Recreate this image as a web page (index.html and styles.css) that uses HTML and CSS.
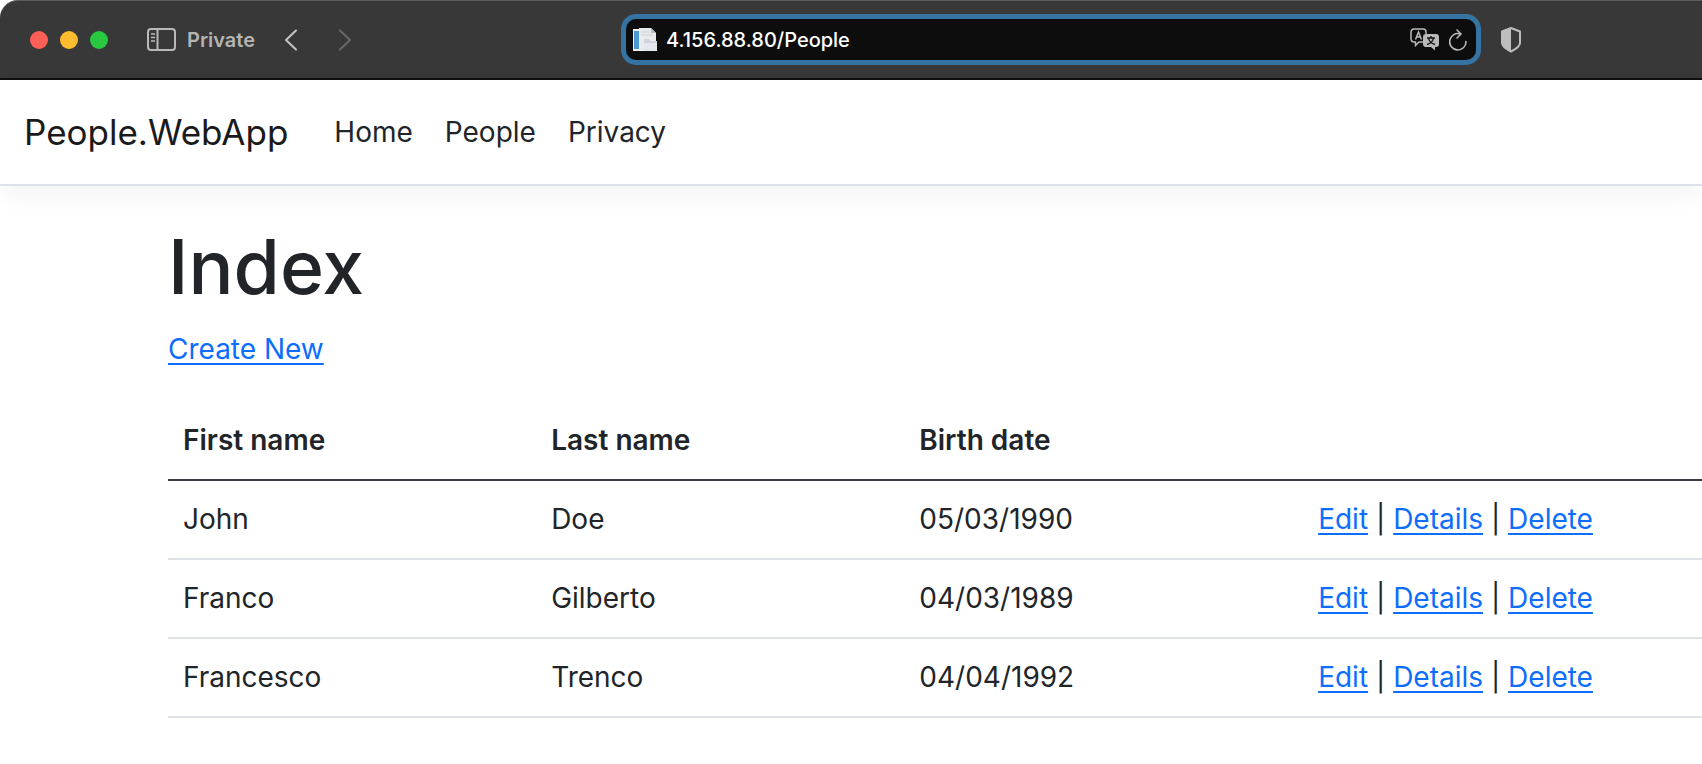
FILE: index.html
```html
<!DOCTYPE html>
<html lang="en">
<head>
<meta charset="utf-8">
<title>Index - People.WebApp</title>
<link rel="stylesheet" href="styles.css">
</head>
<body>
<div class="toolbar">
  <div class="lights">
    <button class="light red" aria-label="Close"></button>
    <button class="light yellow" aria-label="Minimize"></button>
    <button class="light green" aria-label="Zoom"></button>
  </div>
  <button class="icon-button" aria-label="Sidebar">
    <svg width="30" height="24" viewBox="0 0 30 24" fill="none" stroke="#b9b9b9" stroke-width="2"><rect x="1" y="1" width="27" height="21" rx="3"/><path d="M10.500 1v21"/><path d="M4 6h4M4 9.500h4M4 13h4" stroke-width="1.500"/></svg>
  </button>
  <span class="mode">Private</span>
  <button class="icon-button back" aria-label="Back">
    <svg width="14" height="22" viewBox="0 0 14 22" fill="none" stroke="#c4c4c4" stroke-width="2" stroke-linecap="round" stroke-linejoin="round"><path d="M12 1.500 2 11l10 9.500"/></svg>
  </button>
  <button class="icon-button forward" aria-label="Forward">
    <svg width="14" height="22" viewBox="0 0 14 22" fill="none" stroke="#686868" stroke-width="2" stroke-linecap="round" stroke-linejoin="round"><path d="m2 1.500 10 9.500-10 9.500"/></svg>
  </button>
  <div class="address">
    <svg width="26" height="26" viewBox="0 0 26 26"><path d="M1 2h12v22H1z" fill="#eef2f5"/><path d="M2 4h5v18H2z" fill="#4b9bd3"/><path d="M7 1h12l5 5v17H7z" fill="#e8eaec"/><path d="M19 1v5h5z" fill="#b9bdc2"/><path d="M9 5h8M9 8h12" stroke="#cdd1d6"/><path d="M12 12h5l1 2h7v10H12z" fill="#cfd2d8"/><path d="M12 16h13v8H12z" fill="#e4e6ee"/></svg>
    <input class="url" type="text" aria-label="Address" value="4.156.88.80/People">
    <button class="icon-button" aria-label="Translate">
      <svg width="30" height="24" viewBox="0 0 30 24"><path d="M13 14H9l-3.500 3.500V14H4a3 3 0 0 1-3-3V4a3 3 0 0 1 3-3h9a3 3 0 0 1 3 3v2" fill="none" stroke="#b9b9b9" stroke-width="1.500"/><path d="M5.500 11.500 8.500 4l3 7.500M6.500 9h4" fill="none" stroke="#b9b9b9" stroke-width="1.500"/><path d="M16 6h10a3 3 0 0 1 3 3v7a3 3 0 0 1-3 3h-1v3.500L21 19h-5a3 3 0 0 1-3-3V9a3 3 0 0 1 3-3z" fill="#b9b9b9"/><path d="M17 10h8M21 8v2M23.500 10c-.5 3-3 5.500-6.500 6.500M18.500 10c.5 3 3 5.500 6.500 6.500" fill="none" stroke="#161616" stroke-width="1.500"/></svg>
    </button>
    <button class="icon-button" aria-label="Reload">
      <svg width="20" height="24" viewBox="0 0 20 24" fill="none" stroke="#b9b9b9" stroke-width="1.600" stroke-linecap="round" stroke-linejoin="round"><path d="M18 13.500A8.200 8.200 0 1 1 12.500 6"/><path d="m9 2 4 4-4 4"/></svg>
    </button>
  </div>
  <button class="icon-button shield" aria-label="Privacy report">
    <svg width="22" height="26" viewBox="0 0 22 26"><path d="M11 1 20 4.500V16c0 4-6 7-9 8.500C8 23 2 20 2 16V4.500z" fill="none" stroke="#bdbdbd" stroke-width="2" stroke-linejoin="round"/><path d="M11 1v23.500C8 23 2 20 2 16V4.500z" fill="#bdbdbd"/></svg>
  </button>
</div>
<nav class="navbar">
  <a class="brand" href="#">People.WebApp</a>
  <a class="nav-link" href="#">Home</a>
  <a class="nav-link" href="#">People</a>
  <a class="nav-link" href="#">Privacy</a>
</nav>
<main class="container">
  <h1>Index</h1>
  <p class="create"><a href="#">Create New</a></p>
  <table class="table">
    <colgroup><col class="first"><col class="last"><col class="birth"><col></colgroup>
    <thead><tr><th>First name</th><th>Last name</th><th>Birth date</th><th></th></tr></thead>
    <tbody>
      <tr><td>John</td><td>Doe</td><td>05/03/1990</td><td><a href="#">Edit</a> | <a href="#">Details</a> | <a href="#">Delete</a></td></tr>
      <tr><td>Franco</td><td>Gilberto</td><td>04/03/1989</td><td><a href="#">Edit</a> | <a href="#">Details</a> | <a href="#">Delete</a></td></tr>
      <tr><td>Francesco</td><td>Trenco</td><td>04/04/1992</td><td><a href="#">Edit</a> | <a href="#">Details</a> | <a href="#">Delete</a></td></tr>
    </tbody>
  </table>
</main>
</body>
</html>
```
FILE: styles.css
```css
* { box-sizing: border-box; }
body {
  margin: 0;
  background: #fff;
  color: #212529;
  font-family: Inter, "Liberation Sans", sans-serif;
  font-size: 28px;
  line-height: 45px;
}
a { color: #0d6efd; text-decoration-thickness: 2px; text-underline-offset: 4px; }
.toolbar {
  display: flex;
  align-items: center;
  height: 80px;
  padding-left: 30px;
  background: #383838;
  border-top: 1px solid #5c5c5c;
  border-bottom: 2px solid #111;
  border-top-left-radius: 18px;
}
.toolbar button { border: 0; padding: 0; background: none; }
.lights { display: flex; gap: 12px; margin-right: 39px; }
.toolbar .light { width: 18px; height: 18px; border-radius: 50%; }
.toolbar .red { background: #ff5f57; }
.toolbar .yellow { background: #febc2e; }
.toolbar .green { background: #28c840; }
.icon-button { display: flex; flex: none; }
.mode { margin: 0 29px 0 10px; color: #b4b4b4; font-size: 20px; font-weight: 600; line-height: 24px; }
.forward { margin-left: 40px; }
.address {
  display: flex;
  align-items: center;
  gap: 8px;
  width: 860px;
  height: 51px;
  margin-left: 269px;
  padding: 0 8px 0 6px;
  border: 5px solid #3573a3;
  border-radius: 15px;
  background: #0d0d0d;
}
.url {
  flex: 1;
  min-width: 0;
  border: 0;
  padding: 0;
  outline: 0;
  background: none;
  color: #fff;
  font: 500 20px/24px Inter, "Liberation Sans", sans-serif;
}
.shield { margin-left: 19px; }
.navbar {
  display: flex;
  align-items: center;
  gap: 32px;
  height: 106px;
  padding: 0 24px;
  border-bottom: 2px solid #dee2e6;
  box-shadow: 0 8px 24px rgba(0, 0, 0, 0.05);
}
.navbar a { color: #212529; text-decoration: none; }
.navbar .brand { margin-right: 14px; color: #1a1a1a; font-size: 35px; }
.container { padding: 36px 0 0 168px; }
h1 { margin: 0 0 15px; font-size: 75px; font-weight: 500; line-height: 90px; }
.create { margin: 0 0 30px; }
.table { width: 100%; border-collapse: collapse; table-layout: fixed; }
.first { width: 24%; }
.last { width: 24%; }
.birth { width: 26%; }
th, td { padding: 16px 15px; border-bottom: 2px solid #dee2e6; text-align: left; }
th { font-weight: 600; border-bottom-color: #3a3e42; }
```
